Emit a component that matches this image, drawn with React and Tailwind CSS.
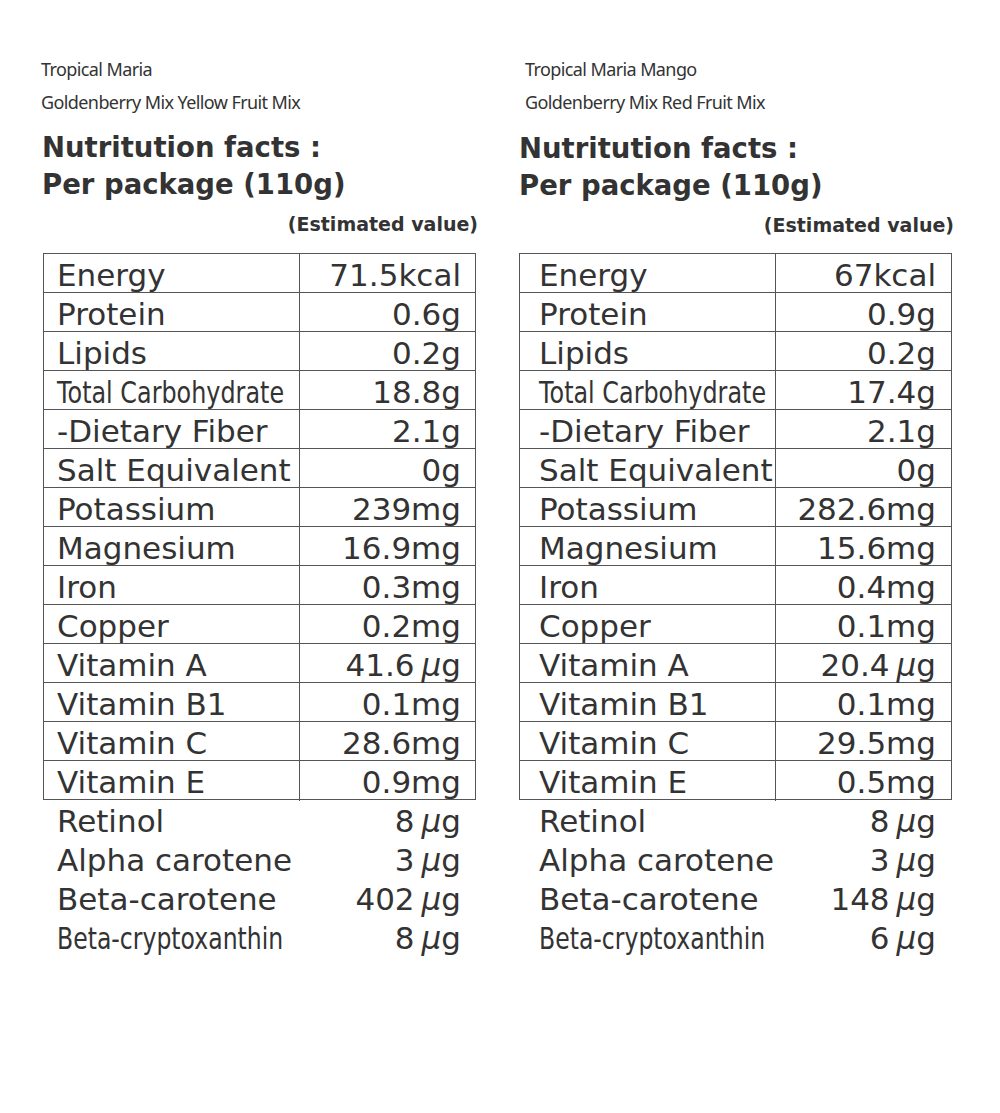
import React from "react";

const left = {
  line1: "Tropical Maria",
  line2: "Goldenberry Mix Yellow Fruit Mix",
  table: [
    ["Energy", "71.5kcal"],
    ["Protein", "0.6g"],
    ["Lipids", "0.2g"],
    ["Total Carbohydrate", "18.8g", "c1"],
    ["-Dietary Fiber", "2.1g"],
    ["Salt Equivalent", "0g"],
    ["Potassium", "239mg"],
    ["Magnesium", "16.9mg"],
    ["Iron", "0.3mg"],
    ["Copper", "0.2mg"],
    ["Vitamin A", "41.6|ug"],
    ["Vitamin B1", "0.1mg"],
    ["Vitamin C", "28.6mg"],
    ["Vitamin E", "0.9mg"],
  ],
  extra: [
    ["Retinol", "8|ug"],
    ["Alpha carotene", "3|ug"],
    ["Beta-carotene", "402|ug"],
    ["Beta-cryptoxanthin", "8|ug", "c2"],
  ],
};

const right = {
  line1: "Tropical Maria Mango",
  line2: "Goldenberry Mix Red Fruit Mix",
  table: [
    ["Energy", "67kcal"],
    ["Protein", "0.9g"],
    ["Lipids", "0.2g"],
    ["Total Carbohydrate", "17.4g", "c1"],
    ["-Dietary Fiber", "2.1g"],
    ["Salt Equivalent", "0g"],
    ["Potassium", "282.6mg"],
    ["Magnesium", "15.6mg"],
    ["Iron", "0.4mg"],
    ["Copper", "0.1mg"],
    ["Vitamin A", "20.4|ug"],
    ["Vitamin B1", "0.1mg"],
    ["Vitamin C", "29.5mg"],
    ["Vitamin E", "0.5mg"],
  ],
  extra: [
    ["Retinol", "8|ug"],
    ["Alpha carotene", "3|ug"],
    ["Beta-carotene", "148|ug"],
    ["Beta-cryptoxanthin", "6|ug", "c2"],
  ],
};

function Value({ v }) {
  if (v.includes("|ug")) {
    const n = v.replace("|ug", "");
    return (
      <span>
        {n}
        <span className="ml-[7px] italic">μ</span>g
      </span>
    );
  }
  return <span>{v}</span>;
}

function Label({ text, kind }) {
  if (kind === "c1")
    return (
      <span className="inline-block origin-left scale-x-[0.77] whitespace-nowrap">{text}</span>
    );
  if (kind === "c2")
    return (
      <span className="inline-block origin-left scale-x-[0.76] whitespace-nowrap">{text}</span>
    );
  return <span className="whitespace-nowrap">{text}</span>;
}

function Panel({ data, right: isRight }) {
  return (
    <div className="w-[434px] shrink-0">
      <div
        className={
          "text-[18px] leading-[33px] tracking-[-0.6px] text-[#333] pt-[53px] " +
          (isRight ? "ml-[6px]" : "ml-[-2px]")
        }
        style={{ fontFamily: '"Noto Sans", sans-serif' }}
      >
        <div>{data.line1}</div>
        <div>{data.line2}</div>
      </div>
      <div
        className={
          "font-bold text-[27.5px] leading-[37px] text-[#333] " +
          (isRight ? "mt-[11px] ml-0" : "mt-[10px] ml-[-1px]")
        }
        style={{ fontFamily: '"DejaVu Sans", sans-serif' }}
      >
        <div>Nutritution facts :</div>
        <div>Per package (110g)</div>
      </div>
      <div
        className={
          "font-bold text-[19px] leading-[28px] text-[#333] text-right " +
          (isRight ? "mt-[7px] mr-[-1px]" : "mt-[7px] mr-[-1px]")
        }
        style={{ fontFamily: '"DejaVu Sans", sans-serif' }}
      >
        (Estimated value)
      </div>
      <div
        className={
          "w-[433px] text-[31px] text-[#333] " + (isRight ? "mt-[14px]" : "mt-[15px]")
        }
        style={{ fontFamily: '"DejaVu Sans", sans-serif' }}
      >
        <div className="border-t border-l border-r border-[#555]">
          {data.table.map(([l, v, k], i) => (
            <div
              key={i}
              className="grid grid-cols-[256px_1fr] h-[39px] border-b border-[#555]"
            >
              <div
                className={
                  "border-r border-[#555] leading-[38px] pt-[2px] " +
                  (isRight ? "pl-[19px]" : "pl-[13px]")
                }
              >
                <Label text={l} kind={k} />
              </div>
              <div
                className={
                  "text-right leading-[38px] pt-[2px] whitespace-nowrap " +
                  (isRight ? "pr-[15px]" : "pr-[14px]")
                }
              >
                <Value v={v} />
              </div>
            </div>
          ))}
        </div>
        <div className="border-l border-r border-transparent">
          {data.extra.map(([l, v, k], i) => (
            <div key={i} className="grid grid-cols-[256px_1fr] h-[39px]">
              <div
                className={
                  "border-r border-transparent leading-[38px] pt-[2px] " +
                  (isRight ? "pl-[19px]" : "pl-[13px]")
                }
              >
                <Label text={l} kind={k} />
              </div>
              <div
                className={
                  "text-right leading-[38px] pt-[2px] whitespace-nowrap " +
                  (isRight ? "pr-[15px]" : "pr-[14px]")
                }
              >
                <Value v={v} />
              </div>
            </div>
          ))}
        </div>
      </div>
    </div>
  );
}

export default function App() {
  return (
    <div className="min-h-[1113px] w-[1000px] bg-white">
      <div className="flex pl-[43px] gap-[42px]">
        <Panel data={left} />
        <Panel data={right} right />
      </div>
    </div>
  );
}
